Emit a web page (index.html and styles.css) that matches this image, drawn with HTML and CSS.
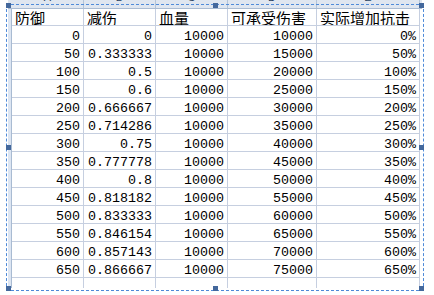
FILE: index.html
```html
<!DOCTYPE html>
<html lang="zh">
<head>
<meta charset="utf-8">
<link rel="stylesheet" href="styles.css">
</head>
<body>
<div class="page">
  <div class="sheet">
    <div class="colhead">
      <div class="corner"></div>
      <div class="ch">A</div><div class="ch">B</div><div class="ch">C</div><div class="ch">D</div><div class="ch">E</div>
    </div>
    <div class="body">
      <div class="rowhead"></div>
      <div class="grid">
        <div class="c h">防御</div><div class="c h">减伤</div><div class="c h">血量</div><div class="c h">可承受伤害</div><div class="c h">实际增加抗击</div>
        <div class="c n">0</div><div class="c n">0</div><div class="c n">10000</div><div class="c n">10000</div><div class="c n">0%</div>
        <div class="c n">50</div><div class="c n">0.333333</div><div class="c n">10000</div><div class="c n">15000</div><div class="c n">50%</div>
        <div class="c n">100</div><div class="c n">0.5</div><div class="c n">10000</div><div class="c n">20000</div><div class="c n">100%</div>
        <div class="c n">150</div><div class="c n">0.6</div><div class="c n">10000</div><div class="c n">25000</div><div class="c n">150%</div>
        <div class="c n">200</div><div class="c n">0.666667</div><div class="c n">10000</div><div class="c n">30000</div><div class="c n">200%</div>
        <div class="c n">250</div><div class="c n">0.714286</div><div class="c n">10000</div><div class="c n">35000</div><div class="c n">250%</div>
        <div class="c n">300</div><div class="c n">0.75</div><div class="c n">10000</div><div class="c n">40000</div><div class="c n">300%</div>
        <div class="c n">350</div><div class="c n">0.777778</div><div class="c n">10000</div><div class="c n">45000</div><div class="c n">350%</div>
        <div class="c n">400</div><div class="c n">0.8</div><div class="c n">10000</div><div class="c n">50000</div><div class="c n">400%</div>
        <div class="c n">450</div><div class="c n">0.818182</div><div class="c n">10000</div><div class="c n">55000</div><div class="c n">450%</div>
        <div class="c n">500</div><div class="c n">0.833333</div><div class="c n">10000</div><div class="c n">60000</div><div class="c n">500%</div>
        <div class="c n">550</div><div class="c n">0.846154</div><div class="c n">10000</div><div class="c n">65000</div><div class="c n">550%</div>
        <div class="c n">600</div><div class="c n">0.857143</div><div class="c n">10000</div><div class="c n">70000</div><div class="c n">600%</div>
        <div class="c n">650</div><div class="c n">0.866667</div><div class="c n">10000</div><div class="c n">75000</div><div class="c n">650%</div>
        <div class="c n"></div><div class="c n"></div><div class="c n"></div><div class="c n"></div><div class="c n"></div>
      </div>
    </div>
  </div>
  <div class="marquee"></div>
  <div class="handle tl"></div><div class="handle tm"></div><div class="handle tr"></div>
  <div class="handle ml"></div><div class="handle mr"></div>
  <div class="handle bl"></div><div class="handle bm"></div><div class="handle br"></div>
</div>
</body>
</html>
```
FILE: styles.css
```css
html, body {
  margin: 0;
  padding: 0;
  background: #ffffff;
}
.page {
  position: relative;
  width: 434px;
  height: 295px;
  overflow: hidden;
  background: #ffffff;
}
.sheet {
  margin-left: 8px;
  width: 414px;
  height: 288px;
  overflow: hidden;
  display: flex;
  flex-direction: column;
}
.colhead {
  display: grid;
  grid-template-columns: 4px 72px 72px 72px 89px 103px 2px;
  height: 9px;
  box-sizing: border-box;
  background: #dfe6f0;
  border-bottom: 1px solid #a9bbd2;
  flex: none;
}
.corner {
  background: #dfe6f0;
}
.ch {
  box-sizing: border-box;
  border-right: 1px solid #b4c4d8;
  overflow: hidden;
  display: flex;
  align-items: flex-end;
  justify-content: center;
  font-family: "Liberation Sans", Arial, sans-serif;
  font-size: 11px;
  line-height: 11px;
  color: #27415f;
  padding-bottom: 5px;
}
.body {
  display: flex;
  flex: 1;
}
.rowhead {
  width: 3px;
  flex: none;
  background: #dce5f2;
  border-right: 1px solid #a9bbd2;
}
.grid {
  display: grid;
  grid-template-columns: 72px 72px 72px 89px 103px;
  grid-template-rows: 17px repeat(14, 18px) 18px;
  align-content: start;
}
.c {
  box-sizing: border-box;
  border-right: 1px solid #c6cfe0;
  border-bottom: 1px solid #c6cfe0;
  display: flex;
  align-items: flex-end;
  color: #000000;
  white-space: nowrap;
  overflow: hidden;
}
.h {
  font-family: "Noto Sans CJK SC", "Noto Sans CJK JP", sans-serif;
  font-size: 15px;
  line-height: 15px;
  padding-left: 3px;
  justify-content: flex-start;
}
.n {
  font-family: "Liberation Mono", "Courier New", monospace;
  font-size: 13.33px;
  line-height: 10px;
  padding-right: 3px;
  padding-bottom: 1px;
  justify-content: flex-end;
}
.marquee {
  position: absolute;
  left: 6px;
  top: 4px;
  width: 418px;
  height: 287px;
  box-sizing: border-box;
  border: 1px dashed #4f8ad8;
  pointer-events: none;
}
.handle {
  position: absolute;
  width: 5px;
  height: 5px;
  background: #44689c;
}
.tl { left: 6px; top: 3px; }
.tm { left: 213px; top: 3px; }
.tr { left: 419px; top: 3px; }
.ml { left: 6px; top: 145px; }
.mr { left: 419px; top: 145px; }
.bl { left: 6px; top: 286px; }
.bm { left: 213px; top: 286px; }
.br { left: 419px; top: 286px; }
```
